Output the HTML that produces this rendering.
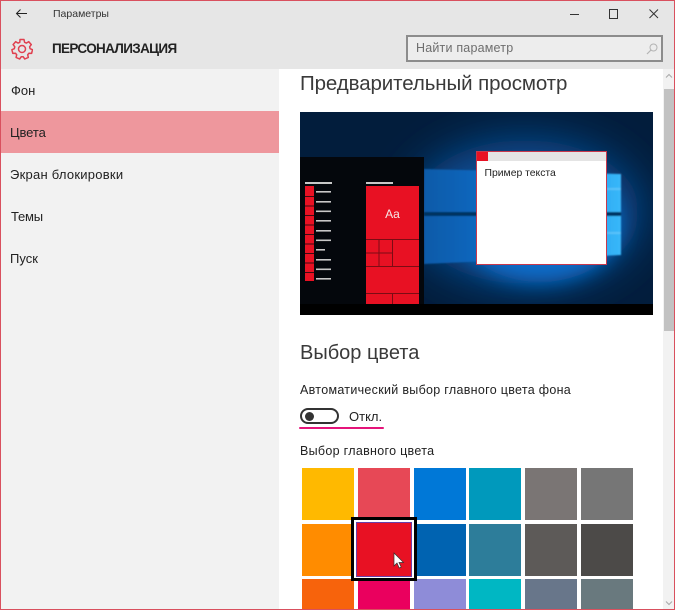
<!DOCTYPE html>
<html lang="ru"><head><meta charset="utf-8"><title>Параметры</title>
<style>
html,body{margin:0;padding:0;background:#fff}
#p{position:relative;width:675px;height:610px;overflow:hidden;background:#fff;font-family:"Liberation Sans","DejaVu Sans",sans-serif;color:#1a1a1a}
#p div{position:absolute}
.t{white-space:nowrap;line-height:1}
.s{width:52px;height:52px}
</style></head><body>
<div id="p">
<div style="left:0;top:0;width:675px;height:69px;background:#e6e6e6"></div>
<div style="left:0;top:69px;width:279px;height:541px;background:#f2f2f2"></div>
<div style="left:0;top:111px;width:279px;height:42px;background:#ee979d"></div>

<svg style="position:absolute;left:14px;top:7px" width="15" height="14" viewBox="0 0 15 14"><path d="M13 6.500H2.500M6.500 2.500l-4 4 4 4" fill="none" stroke="#222" stroke-width="1"/></svg>
<div class="t" style="left:53px;top:8.500px;font-size:10.500px;color:#333">Параметры</div>
<svg style="position:absolute;left:11px;top:38px" width="22" height="22" viewBox="0 0 22 22"><path d="M9 1.500h4l.6 2.800 1.700.8 2.500-1.400 2.500 2.900-1.700 2.200.5 1.900 2.400 1-.9 3.700-2.700-.1-1.200 1.400.6 2.700-3.500 1.600-1.600-2.200h-2l-1.600 2.200-3.500-1.600.6-2.700-1.200-1.400-2.700.1-.9-3.700 2.400-1 .5-1.900-1.700-2.200 2.500-2.900 2.500 1.400 1.700-.8z" fill="none" stroke="#e0404f" stroke-width="1.500" stroke-linejoin="round"/><circle cx="11" cy="11" r="3.500" fill="none" stroke="#e0404f" stroke-width="1.500"/></svg>
<div class="t" style="left:52px;top:42px;font-size:13.500px;font-weight:bold;color:#222;letter-spacing:-.65px">ПЕРСОНАЛИЗАЦИЯ</div>

<div style="left:570px;top:14px;width:9px;height:1px;background:#333"></div>
<div style="left:609px;top:9px;width:7px;height:8px;border:1px solid #333"></div>
<svg style="position:absolute;left:648px;top:8px" width="12" height="12" viewBox="0 0 12 12"><path d="M1.500 1.500l8.500 8.500M10 1.500 1.500 10" stroke="#333" stroke-width="1" fill="none"/></svg>

<div style="left:406px;top:35px;width:253px;height:23px;border:2px solid #8c8c8c;background:#ededed"></div>
<div class="t" style="left:416px;top:42px;font-size:12.500px;color:#6e6e6e;letter-spacing:.2px">Найти параметр</div>
<svg style="position:absolute;left:645px;top:42px" width="14" height="14" viewBox="0 0 14 14"><circle cx="8.500" cy="5.500" r="3.500" fill="none" stroke="#b4b4b4"/><path d="M6 8l-4 4" stroke="#b4b4b4" stroke-width="1.200"/></svg>

<div class="t" style="left:11px;top:84px;font-size:13px;color:#222">Фон</div>
<div class="t" style="left:10px;top:126px;font-size:13px;color:#222;letter-spacing:-.1px">Цвета</div>
<div class="t" style="left:10px;top:168px;font-size:13px;color:#222;letter-spacing:.25px">Экран блокировки</div>
<div class="t" style="left:11px;top:210px;font-size:13px;color:#222;letter-spacing:-.2px">Темы</div>
<div class="t" style="left:10px;top:252px;font-size:13px;color:#222">Пуск</div>

<div style="left:663px;top:69px;width:11px;height:541px;background:#f2f2f2"></div>
<div style="left:664px;top:89px;width:10px;height:242px;background:#c2c2c2"></div>
<svg style="position:absolute;left:665px;top:73px" width="8" height="6" viewBox="0 0 8 6"><path d="M1 4.500 4 1.500l3 3" fill="none" stroke="#a8a8a8"/></svg>
<svg style="position:absolute;left:665px;top:600px" width="8" height="6" viewBox="0 0 8 6"><path d="M1 1.500 4 4.500l3-3" fill="none" stroke="#a8a8a8"/></svg>

<div class="t" style="left:300px;top:74px;font-size:20.500px;color:#3a3a3a;letter-spacing:-.1px">Предварительный просмотр</div>

<svg style="position:absolute;left:300px;top:112px" width="353" height="203" viewBox="0 0 353 203">
<defs>
<linearGradient id="a" x1="0" x2="1" y1="0" y2="0"><stop offset="0" stop-color="#0a5aa8"/><stop offset=".5" stop-color="#0a72d0"/><stop offset="1" stop-color="#38b8fa"/></linearGradient>
<filter id="b" x="-50%" y="-50%" width="200%" height="200%"><feGaussianBlur stdDeviation="22"/></filter>
<filter id="c" x="-50%" y="-50%" width="200%" height="200%"><feGaussianBlur stdDeviation="10"/></filter>
<filter id="d"><feGaussianBlur stdDeviation=".7"/></filter>
</defs>
<rect width="353" height="203" fill="#021d3c"/>
<ellipse cx="225" cy="100" rx="115" ry="72" fill="#074f98" filter="url(#b)"/>
<ellipse cx="240" cy="115" rx="80" ry="55" fill="#0a6cc8" filter="url(#c)"/>
<g filter="url(#d)">
<path d="M124 57 L321 62 V100 H124Z" fill="url(#a)"/>
<path d="M124 104 H321 V143 L124 152Z" fill="url(#a)"/>
<path d="M124 100h197v4H124z" fill="#053260"/>
<path d="M307 76h14v2h-14zM307 120h14v2h-14z" fill="#7fd2fb" opacity=".5"/>
</g>
<rect y="192" width="353" height="11" fill="#000"/>
<rect y="45" width="124" height="147" fill="#04070c"/>
<rect x="5" y="70" width="27" height="2" fill="#c8c8c8"/>
<rect x="66" y="70" width="27" height="2" fill="#c8c8c8"/>
<rect x="5" y="74" width="9" height="95" fill="#e81123"/>
<g stroke="#04070c" stroke-width=".8"><path d="M5 84.500h9M5 94h9M5 103.500h9M5 113h9M5 122.500h9M5 132h9M5 141.500h9M5 151h9M5 160.500h9"/></g>
<g fill="#c8c8c8"><rect x="16" y="79" width="15" height="1.600"/><rect x="16" y="89" width="15" height="1.600"/><rect x="16" y="98.500" width="15" height="1.600"/><rect x="16" y="108" width="15" height="1.600"/><rect x="16" y="118" width="15" height="1.600"/><rect x="16" y="127.500" width="15" height="1.600"/><rect x="16" y="137" width="9" height="1.600"/><rect x="16" y="147" width="15" height="1.600"/><rect x="16" y="156.500" width="15" height="1.600"/><rect x="16" y="166" width="15" height="1.600"/></g>
<rect x="66" y="74" width="53" height="118" fill="#e81123"/>
<g stroke="#7c0c14" stroke-width="1" fill="none"><path d="M66 127.500h53M66 141h26M66 154.500h53M66 181.500h53M79 127.500v27M92.500 127.500v27M92.500 181.500V192"/></g>
<text x="92.500" y="106" text-anchor="middle" font-family="Liberation Sans, sans-serif" font-size="12" fill="#f6e8e8">Aa</text>
<rect x="176.500" y="39.500" width="130" height="113" fill="#fff" stroke="#c8384c"/>
<rect x="177" y="40" width="129" height="9" fill="#e4e4e4"/>
<rect x="177" y="40" width="11" height="9" fill="#e81123"/>
<text x="184.500" y="64" font-family="Liberation Sans, sans-serif" font-size="10.400" fill="#222">Пример текста</text>
</svg>

<div class="t" style="left:300px;top:343px;font-size:20px;color:#3a3a3a">Выбор цвета</div>
<div class="t" style="left:300px;top:384px;font-size:12.500px;color:#222;letter-spacing:.3px">Автоматический выбор главного цвета фона</div>
<div style="left:300px;top:408px;width:35px;height:12px;border:2px solid #333;border-radius:9px"></div>
<div style="left:305px;top:411.500px;width:9px;height:9px;border-radius:50%;background:#333"></div>
<div class="t" style="left:349px;top:410px;font-size:13px;color:#222">Откл.</div>
<div style="left:299px;top:427px;width:85px;height:2px;background:#e5147a;border-radius:1px"></div>
<div class="t" style="left:300px;top:445px;font-size:12.500px;color:#222;letter-spacing:.3px">Выбор главного цвета</div>

<div class="s" style="left:302px;top:468px;background:#ffb900"></div>
<div class="s" style="left:358px;top:468px;background:#e74856"></div>
<div class="s" style="left:414px;top:468px;background:#0078d7"></div>
<div class="s" style="left:469px;top:468px;background:#0099bc"></div>
<div class="s" style="left:525px;top:468px;background:#7a7574"></div>
<div class="s" style="left:581px;top:468px;background:#767676"></div>
<div class="s" style="left:302px;top:524px;background:#ff8c00"></div>
<div class="s" style="left:414px;top:524px;background:#0063b1"></div>
<div class="s" style="left:469px;top:524px;background:#2d7d9a"></div>
<div class="s" style="left:525px;top:524px;background:#5d5a58"></div>
<div class="s" style="left:581px;top:524px;background:#4c4a48"></div>
<div class="s" style="left:302px;top:579px;background:#f7630c"></div>
<div class="s" style="left:358px;top:579px;background:#ea005e"></div>
<div class="s" style="left:414px;top:579px;background:#8e8cd8"></div>
<div class="s" style="left:469px;top:579px;background:#00b7c3"></div>
<div class="s" style="left:525px;top:579px;background:#68768a"></div>
<div class="s" style="left:581px;top:579px;background:#69797e"></div>

<div style="left:351px;top:517px;width:60px;height:58px;border:3px solid #000;background:#fff"></div>
<div style="left:356px;top:522px;width:56px;height:55px;box-sizing:border-box;border:1.500px solid #6a3ea8;background:#e81123"></div>
<svg style="position:absolute;left:393px;top:552px" width="12" height="18" viewBox="0 0 12 18"><path d="M1 1v13l3-3 2.200 5 2-.9L6 10.500h4.500z" fill="#fff" stroke="#333" stroke-width=".7"/></svg>

<div style="left:0;top:0;width:675px;height:1px;background:#d9505e"></div>
<div style="left:0;top:0;width:1px;height:610px;background:#d9505e"></div>
<div style="left:674px;top:0;width:1px;height:610px;background:#d9505e"></div>
<div style="left:0;top:609px;width:675px;height:1px;background:#d9505e"></div>
</div>
</body></html>
